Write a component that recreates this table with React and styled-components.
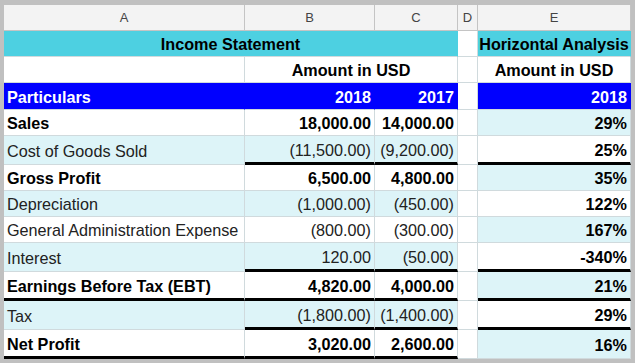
import styled, { createGlobalStyle } from 'styled-components';

const GlobalStyle = createGlobalStyle`
  html, body {
    margin: 0;
    padding: 0;
    background: #c0c0c0;
  }
  body {
    font-family: "Liberation Sans", Arial, sans-serif;
  }
`;

const GRID = '#d0dadd';
const COLORS = {
  white: '#ffffff',
  light: '#ddf4f8',
  cyan: '#4dd0e1',
  blue: '#0000ff',
  head: '#f3f3f3',
};

const Frame = styled.div`
  padding: 5px 4px 4px 4px;
`;

const Sheet = styled.div`
  display: grid;
  grid-template-columns: 241px 130px 83px 20px 153px;
  background: #fff;
`;

const Cell = styled.div`
  box-sizing: border-box;
  display: flex;
  align-items: center;
  justify-content: ${(p) => (p.$align === 'right' ? 'flex-end' : p.$align === 'center' ? 'center' : 'flex-start')};
  height: ${(p) => p.$h || 26}px;
  padding: 2px 3px 0 3px;
  grid-column: ${(p) => (p.$span ? `span ${p.$span}` : 'auto')};
  background: ${(p) => COLORS[p.$bg || 'white']};
  border-right: 1px solid ${(p) => (p.$bg === 'cyan' || p.$bg === 'blue' ? COLORS[p.$bg] : GRID)};
  border-bottom: ${(p) => (p.$rule ? '3px solid #000' : `1px solid ${GRID}`)};
  font-size: 16.2px;
  font-weight: ${(p) => (p.$bold ? 700 : 400)};
  color: ${(p) => (p.$bg === 'blue' ? '#fff' : p.$bold ? '#000' : '#222')};
  white-space: nowrap;
  overflow: hidden;
`;

const ColHead = styled.div`
  box-sizing: border-box;
  height: 26px;
  display: flex;
  align-items: center;
  justify-content: center;
  background: ${COLORS.head};
  border-right: 1px solid #c4c4c4;
  border-bottom: 1px solid #c4c4c4;
  font-size: 13px;
  color: #444;
`;

const rows = [
  { label: 'Sales', b: '18,000.00', c: '14,000.00', e: '29%', bold: true },
  { label: 'Cost of Goods Sold', b: '(11,500.00)', c: '(9,200.00)', e: '25%', shade: true, ruleBC: true, ruleE: true },
  { label: 'Gross Profit', b: '6,500.00', c: '4,800.00', e: '35%', bold: true },
  { label: 'Depreciation', b: '(1,000.00)', c: '(450.00)', e: '122%', shade: true },
  { label: 'General Administration Expense', b: '(800.00)', c: '(300.00)', e: '167%' },
  { label: 'Interest', b: '120.00', c: '(50.00)', e: '-340%', shade: true, ruleBC: true, ruleE: true },
  { label: 'Earnings Before Tax (EBT)', b: '4,820.00', c: '4,000.00', e: '21%', bold: true, ruleA: true, ruleBC: true, ruleE: true },
  { label: 'Tax', b: '(1,800.00)', c: '(1,400.00)', e: '29%', shade: true, ruleBC: true, ruleE: true },
  { label: 'Net Profit', b: '3,020.00', c: '2,600.00', e: '16%', bold: true, ruleA: true, ruleBC: true },
];

function DataRow({ row }) {
  const h = row.ruleA || row.ruleBC || row.ruleE ? 29 : 26;
  const bg = row.shade ? 'light' : 'white';
  const eBg = row.shade ? 'white' : 'light';
  return (
    <>
      <Cell $h={h} $bg={bg} $bold={row.bold} $rule={row.ruleA}>{row.label}</Cell>
      <Cell $h={h} $bg={bg} $bold={row.bold} $rule={row.ruleBC} $align="right">{row.b}</Cell>
      <Cell $h={h} $bg={bg} $bold={row.bold} $rule={row.ruleBC} $align="right">{row.c}</Cell>
      <Cell $h={h} />
      <Cell $h={h} $bg={eBg} $bold $rule={row.ruleE} $align="right">{row.e}</Cell>
    </>
  );
}

export default function App() {
  return (
    <>
      <GlobalStyle />
      <Frame>
        <Sheet>
          {['A', 'B', 'C', 'D', 'E'].map((l) => (
            <ColHead key={l}>{l}</ColHead>
          ))}

          <Cell $span={3} $bg="cyan" $bold $align="center">Income Statement</Cell>
          <Cell />
          <Cell $bg="cyan" $bold $align="center">Horizontal Analysis</Cell>

          <Cell />
          <Cell $span={2} $bold $align="center">Amount in USD</Cell>
          <Cell />
          <Cell $bold $align="center">Amount in USD</Cell>

          <Cell $h={27} $bg="blue" $bold>Particulars</Cell>
          <Cell $h={27} $bg="blue" $bold $align="right">2018</Cell>
          <Cell $h={27} $bg="blue" $bold $align="right">2017</Cell>
          <Cell $h={27} />
          <Cell $h={27} $bg="blue" $bold $align="right">2018</Cell>

          {rows.map((r) => (
            <DataRow key={r.label} row={r} />
          ))}
        </Sheet>
      </Frame>
    </>
  );
}
